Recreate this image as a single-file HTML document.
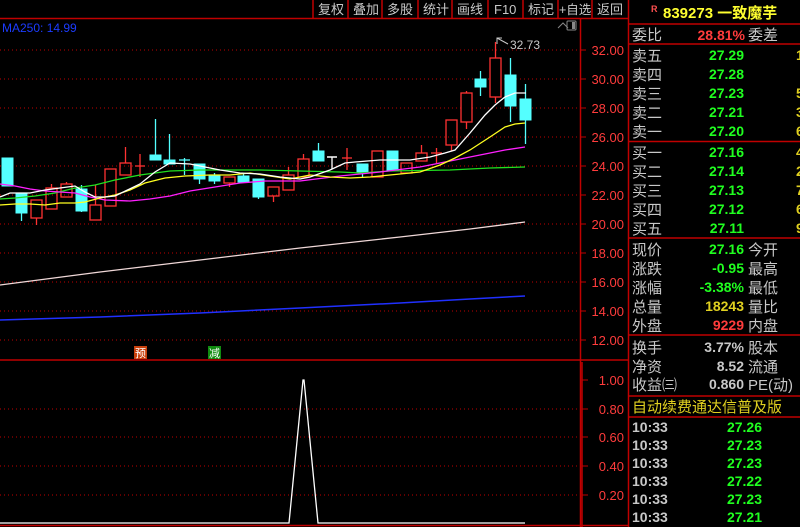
<!DOCTYPE html>
<html><head><meta charset="utf-8"><style>
html,body{margin:0;padding:0;background:#000;width:800px;height:527px;overflow:hidden}
svg{display:block}
text{font-family:"Liberation Sans","WenQuanYi Zen Hei","Noto Sans CJK SC",sans-serif}
.tb{fill:#c8c8c8;font-size:13px}
.ax{fill:#ff3c3c;font-size:13px}
.lb{fill:#c8c8c8;font-size:15px}
.g{fill:#20ff20;font-size:14px;font-weight:bold}
.gr{fill:#c8c8c8;font-size:14px;font-weight:bold}
.dot{stroke:#c00000;stroke-width:1;stroke-dasharray:1 3}
.R{stroke:#ff3232;fill:none;stroke-width:1.3}
.C{fill:#54ffff;stroke:#54ffff}
.Cw{stroke:#54ffff;stroke-width:1.3}
.Rw{stroke:#ff3232;stroke-width:1.3}
</style></head><body>
<svg width="800" height="527" viewBox="0 0 800 527" xmlns="http://www.w3.org/2000/svg">
<g stroke="#c00000" stroke-width="1.5">
<line x1="0" y1="18.5" x2="628" y2="18.5"/>
<line x1="313" y1="0" x2="313" y2="18"/><line x1="348" y1="0" x2="348" y2="18"/><line x1="382" y1="0" x2="382" y2="18"/><line x1="418" y1="0" x2="418" y2="18"/><line x1="452" y1="0" x2="452" y2="18"/><line x1="488" y1="0" x2="488" y2="18"/><line x1="523" y1="0" x2="523" y2="18"/><line x1="558" y1="0" x2="558" y2="18"/><line x1="592" y1="0" x2="592" y2="18"/>
<line x1="580.5" y1="18" x2="580.5" y2="527"/>
<line x1="628.5" y1="0" x2="628.5" y2="527"/>
<line x1="0" y1="360" x2="628" y2="360"/>
<line x1="0" y1="525.5" x2="628" y2="525.5"/>
<line x1="582" y1="362" x2="582" y2="527"/>
</g>
<g class="tb">
<text x="318" y="14">复权</text><text x="353" y="14">叠加</text><text x="387" y="14">多股</text><text x="423" y="14">统计</text><text x="457" y="14">画线</text><text x="494" y="14">F10</text><text x="528" y="14">标记</text><text x="559" y="14" font-size="12.5">+自选</text><text x="597" y="14">返回</text>
</g>
<path d="M558 28 L563 23 L568 28" stroke="#888" fill="none"/>
<rect x="567" y="21" width="9" height="9" fill="none" stroke="#888" rx="1"/><rect x="572" y="22" width="3" height="7" fill="#888"/>
<text x="2" y="32" fill="#1c3cff" font-size="12">MA250: 14.99</text>
<g class="dot">
<line x1="0" y1="50" x2="580" y2="50"/><line x1="0" y1="79" x2="580" y2="79"/><line x1="0" y1="108" x2="580" y2="108"/><line x1="0" y1="137" x2="580" y2="137"/><line x1="0" y1="166" x2="580" y2="166"/><line x1="0" y1="195" x2="580" y2="195"/><line x1="0" y1="224" x2="580" y2="224"/><line x1="0" y1="253" x2="580" y2="253"/><line x1="0" y1="282" x2="580" y2="282"/><line x1="0" y1="311" x2="580" y2="311"/><line x1="0" y1="340" x2="580" y2="340"/>
<line x1="0" y1="409" x2="580" y2="409"/><line x1="0" y1="437" x2="580" y2="437"/><line x1="0" y1="466" x2="580" y2="466"/><line x1="0" y1="495" x2="580" y2="495"/>
</g>
<g stroke="#c00000">
<line x1="580" y1="50" x2="586" y2="50"/><line x1="580" y1="79" x2="586" y2="79"/><line x1="580" y1="108" x2="586" y2="108"/><line x1="580" y1="137" x2="586" y2="137"/><line x1="580" y1="166" x2="586" y2="166"/><line x1="580" y1="195" x2="586" y2="195"/><line x1="580" y1="224" x2="586" y2="224"/><line x1="580" y1="253" x2="586" y2="253"/><line x1="580" y1="282" x2="586" y2="282"/><line x1="580" y1="311" x2="586" y2="311"/><line x1="580" y1="340" x2="586" y2="340"/>
<line x1="582" y1="380" x2="588" y2="380"/><line x1="582" y1="409" x2="588" y2="409"/><line x1="582" y1="437" x2="588" y2="437"/><line x1="582" y1="466" x2="588" y2="466"/><line x1="582" y1="495" x2="588" y2="495"/>
</g>
<g class="ax" text-anchor="end">
<text x="624" y="55">32.00</text><text x="624" y="84">30.00</text><text x="624" y="113">28.00</text><text x="624" y="142">26.00</text><text x="624" y="171">24.00</text><text x="624" y="200">22.00</text><text x="624" y="229">20.00</text><text x="624" y="258">18.00</text><text x="624" y="287">16.00</text><text x="624" y="316">14.00</text><text x="624" y="345">12.00</text>
<text x="624" y="385">1.00</text><text x="624" y="414">0.80</text><text x="624" y="442">0.60</text><text x="624" y="471">0.40</text><text x="624" y="500">0.20</text>
</g>
<polyline points="0,285 100,272 200,260 300,248 400,237 470,229 525,222" stroke="#f0d8d8" fill="none" stroke-width="1.3"/>
<polyline points="0,320 100,317 200,313 300,308 400,303 470,299 525,296" stroke="#2030ff" fill="none" stroke-width="1.5"/>
<g>
<rect x="2" y="158" width="11" height="28" class="C"/>
<line x1="21.5" y1="213" x2="21.5" y2="221" class="Cw"/><rect x="16" y="193" width="11" height="20" class="C"/>
<line x1="36.5" y1="218" x2="36.5" y2="225" class="Rw"/><rect x="31" y="200" width="11" height="18" class="R"/>
<line x1="51.5" y1="184" x2="51.5" y2="188" class="Rw"/><rect x="46" y="188" width="11" height="21" class="R"/>
<line x1="66.5" y1="182" x2="66.5" y2="184" class="Rw"/><rect x="61" y="184" width="11" height="13" class="R"/>
<line x1="81.5" y1="185" x2="81.5" y2="212" class="Cw"/><rect x="76" y="189" width="11" height="22" class="C"/>
<line x1="95.5" y1="185" x2="95.5" y2="205" class="Rw"/><rect x="90" y="205" width="11" height="15" class="R"/>
<rect x="105" y="169" width="11" height="37" class="R"/>
<line x1="125.5" y1="147" x2="125.5" y2="163" class="Rw"/><rect x="120" y="163" width="11" height="12" class="R"/>
<line x1="140" y1="154" x2="140" y2="177" class="Rw"/><line x1="135" y1="166" x2="145" y2="166" class="Rw" stroke-width="2"/>
<line x1="155.5" y1="119" x2="155.5" y2="160" class="Cw"/><rect x="150" y="155" width="11" height="5" class="C"/>
<line x1="169.5" y1="134" x2="169.5" y2="164" class="Cw"/><rect x="164" y="160" width="11" height="4" class="C"/>
<line x1="184.5" y1="158" x2="184.5" y2="175" class="Cw"/><line x1="179" y1="160" x2="190" y2="160" class="Cw"/>
<line x1="199.5" y1="164" x2="199.5" y2="184" class="Cw"/><rect x="194" y="164" width="11" height="15" class="C"/>
<line x1="214.5" y1="173" x2="214.5" y2="184" class="Cw"/><rect x="209" y="176" width="11" height="5" class="C"/>
<line x1="229.5" y1="183" x2="229.5" y2="187" class="Rw"/><rect x="224" y="177" width="11" height="6" class="R"/>
<line x1="243.5" y1="173" x2="243.5" y2="182" class="Cw"/><rect x="238" y="176" width="11" height="6" class="C"/>
<line x1="258.5" y1="179" x2="258.5" y2="199" class="Cw"/><rect x="253" y="179" width="11" height="18" class="C"/>
<line x1="273.5" y1="196" x2="273.5" y2="202" class="Rw"/><rect x="268" y="187" width="11" height="9" class="R"/>
<line x1="288.5" y1="167" x2="288.5" y2="175" class="Rw"/><rect x="283" y="175" width="11" height="15" class="R"/>
<line x1="303.5" y1="154" x2="303.5" y2="159" class="Rw"/><rect x="298" y="159" width="11" height="18" class="R"/>
<line x1="318.5" y1="143" x2="318.5" y2="151" class="Cw"/><rect x="313" y="151" width="11" height="10" class="C"/>
<line x1="332" y1="157" x2="332" y2="169" stroke="#fff" stroke-width="1.3"/><line x1="327" y1="157" x2="337" y2="157" stroke="#fff" stroke-width="1.5"/>
<line x1="347" y1="148" x2="347" y2="170" class="Rw"/><line x1="342" y1="158" x2="352" y2="158" class="Rw" stroke-width="2"/>
<line x1="362.5" y1="164" x2="362.5" y2="178" class="Cw"/><rect x="357" y="164" width="11" height="8" class="C"/>
<rect x="372" y="151" width="11" height="26" class="R"/>
<rect x="387" y="151" width="11" height="20" class="C"/>
<rect x="401" y="163" width="11" height="10" class="R"/>
<line x1="421.5" y1="145" x2="421.5" y2="153" class="Rw"/><rect x="416" y="153" width="11" height="8" class="R"/>
<line x1="436.5" y1="148" x2="436.5" y2="163" class="Rw"/><line x1="431" y1="153" x2="442" y2="153" class="Rw" stroke-width="2"/>
<line x1="451.5" y1="145" x2="451.5" y2="151" class="Rw"/><rect x="446" y="120" width="11" height="25" class="R"/>
<line x1="466.5" y1="91" x2="466.5" y2="129" class="Rw"/><rect x="461" y="93" width="11" height="29" class="R" style="fill:#000"/>
<line x1="480.5" y1="71" x2="480.5" y2="96" class="Cw"/><rect x="475" y="79" width="11" height="8" class="C"/>
<line x1="495.5" y1="42" x2="495.5" y2="103" class="Rw"/><rect x="490" y="58" width="11" height="39" class="R" style="fill:#000"/>
<line x1="510.5" y1="58" x2="510.5" y2="122" class="Cw"/><rect x="505" y="75" width="11" height="31" class="C"/>
<line x1="525.5" y1="84" x2="525.5" y2="144" class="Cw"/><rect x="520" y="99" width="11" height="21" class="C"/>
</g>
<polyline fill="none" stroke="#20e020" stroke-width="1.3" points="0,199 15,198 35,196 55,193 75,188 95,185 115,180 140,175 170,171 200,170 230,170 260,170 300,171 340,172 360,173 390,171 450,170 490,168 525,167"/>
<polyline fill="none" stroke="#ff20ff" stroke-width="1.3" points="0,184 15,186 30,189 45,191 60,192 75,193 90,197 105,200 130,201 150,199 170,196 190,191 215,187 240,183 265,181 300,181 340,176 380,172 420,167 450,161 480,155 505,150 525,147"/>
<polyline fill="none" stroke="#ffff20" stroke-width="1.3" points="0,205 15,204 30,204 45,205 60,203 75,203 85,202 100,198 115,195 130,190 145,183 165,178 185,176 210,175 230,175 250,173 270,176 290,179 310,175 330,177 350,178 370,177 390,175 420,172 440,165 455,158 470,150 490,137 505,127 515,124 525,123"/>
<polyline fill="none" stroke="#ffffff" stroke-width="1.3" points="0,197 10,193 30,193 45,190 60,188 75,186 85,192 95,197 105,197 115,196 140,184 155,172 170,163 190,164 205,167 220,170 240,173 260,174 280,177 300,179 310,177 330,170 345,163 355,162 380,160 410,160 430,157 445,153 455,150 470,133 485,115 495,105 505,97 515,93 526,93"/>
<path d="M497 44 L497 38 L502 38 M497 38 L508 44" stroke="#c8c8c8" fill="none"/>
<text x="510" y="49" fill="#c8c8c8" font-size="12">32.73</text>
<rect x="134" y="346" width="13" height="13" fill="#c8400c"/><text x="135" y="357" fill="#fff" font-size="11">预</text>
<rect x="208" y="346" width="13" height="13" fill="#108c10"/><text x="209" y="357" fill="#fff" font-size="11">减</text>
<polyline fill="none" stroke="#fff" stroke-width="1.3" points="0,523 289,523 303,380 304,380 318,523 525,523"/>
<g stroke="#c00000" stroke-width="1.5">
<line x1="628" y1="24" x2="800" y2="24"/><line x1="628" y1="44" x2="800" y2="44"/><line x1="628" y1="141.5" x2="800" y2="141.5"/><line x1="628" y1="238" x2="800" y2="238"/><line x1="628" y1="335" x2="800" y2="335"/><line x1="628" y1="396" x2="800" y2="396"/><line x1="628" y1="417" x2="800" y2="417"/>
</g>
<text x="651" y="12" fill="#ff5050" font-size="9" font-weight="bold">R</text>
<text x="663" y="18" fill="#ffff30" font-size="15" font-weight="bold">839273 一致魔芋</text>
<text x="632" y="40" class="lb">委比</text><text x="745" y="40" fill="#ff3c3c" font-size="14" font-weight="bold" text-anchor="end">28.81%</text><text x="748" y="40" class="lb">委差</text>
<g class="lb">
<text x="632" y="61">卖五</text><text x="632" y="80">卖四</text><text x="632" y="99">卖三</text><text x="632" y="118">卖二</text><text x="632" y="137">卖一</text>
<text x="632" y="158">买一</text><text x="632" y="177">买二</text><text x="632" y="196">买三</text><text x="632" y="215">买四</text><text x="632" y="234">买五</text>
<text x="632" y="255">现价</text><text x="632" y="274">涨跌</text><text x="632" y="293">涨幅</text><text x="632" y="312">总量</text><text x="632" y="331">外盘</text>
<text x="748" y="255">今开</text><text x="748" y="274">最高</text><text x="748" y="293">最低</text><text x="748" y="312">量比</text><text x="748" y="331">内盘</text>
<text x="632" y="353">换手</text><text x="632" y="372">净资</text><text x="632" y="390">收益㈢</text>
<text x="748" y="353">股本</text><text x="748" y="372">流通</text><text x="748" y="390">PE(动)</text>
</g>
<g class="g" text-anchor="end">
<text x="744" y="60">27.29</text><text x="744" y="79">27.28</text><text x="744" y="98">27.23</text><text x="744" y="117">27.21</text><text x="744" y="136">27.20</text>
<text x="744" y="157">27.16</text><text x="744" y="176">27.14</text><text x="744" y="195">27.13</text><text x="744" y="214">27.12</text><text x="744" y="233">27.11</text>
<text x="744" y="254">27.16</text><text x="744" y="273">-0.95</text><text x="744" y="292">-3.38%</text>
<text x="744" y="311" style="fill:#e0d020">18243</text><text x="744" y="330" style="fill:#ff3c3c">9229</text>
<text x="744" y="352" style="fill:#c8c8c8">3.77%</text><text x="744" y="371" style="fill:#c8c8c8">8.52</text><text x="744" y="389" style="fill:#c8c8c8">0.860</text>
</g>
<g fill="#e0d020" font-size="14" font-weight="bold">
<text x="796" y="60">1</text><text x="796" y="98">5</text><text x="796" y="117">3</text><text x="796" y="136">6</text><text x="796" y="157">4</text><text x="796" y="176">2</text><text x="796" y="195">7</text><text x="796" y="214">6</text><text x="796" y="233">9</text>
</g>
<text x="632" y="412" fill="#e0d020" font-size="15">自动续费通达信普及版</text>
<g class="gr"><text x="632" y="432">10:33</text><text x="632" y="450">10:33</text><text x="632" y="468">10:33</text><text x="632" y="486">10:33</text><text x="632" y="504">10:33</text><text x="632" y="522">10:33</text></g>
<g class="g" text-anchor="end"><text x="762" y="432">27.26</text><text x="762" y="450">27.23</text><text x="762" y="468">27.23</text><text x="762" y="486">27.22</text><text x="762" y="504">27.23</text><text x="762" y="522">27.21</text></g>
</svg>
</body></html>
